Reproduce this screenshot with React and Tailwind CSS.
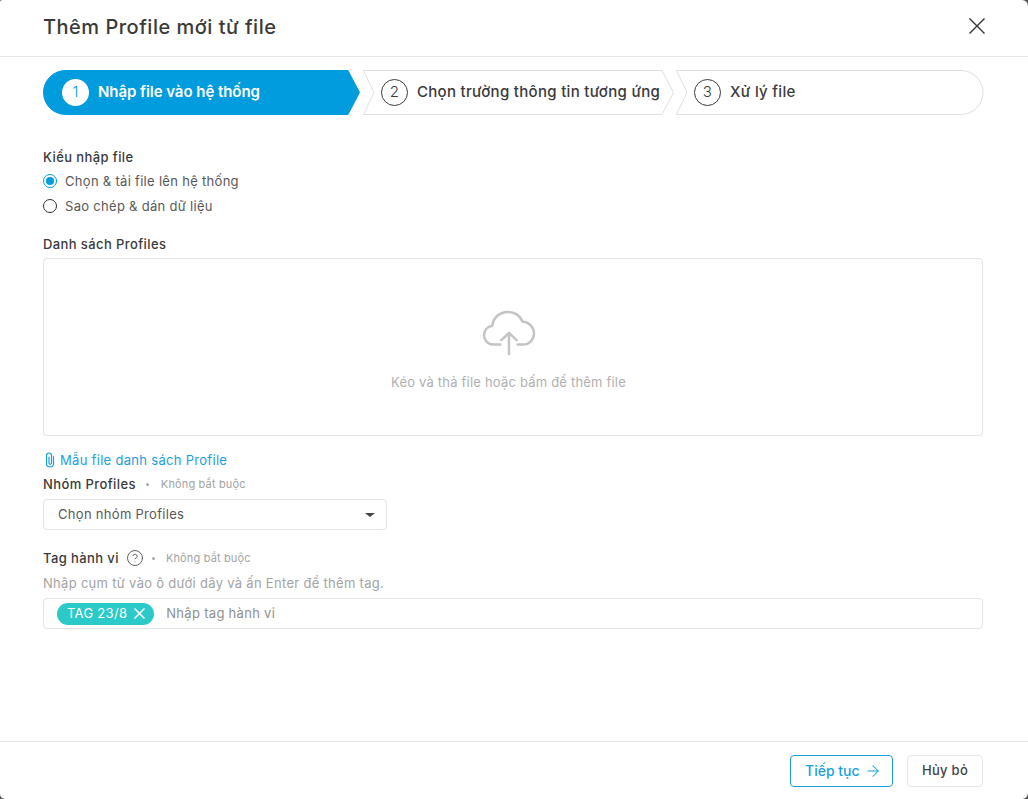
import { ArrowRight, CircleHelp } from 'lucide-react'

function StepShape({ first, last, active }) {
  const w = active ? 317 : last ? 308 : 311
  const h = 45
  let d
  if (first) d = `M22.5 0.5 H${w - 12} L${w - 0.5} 22.5 L${w - 12} 44.5 H22.5 A22 22 0 0 1 22.5 0.5 Z`
  else if (last) d = `M0.5 0.5 H${w - 23} A22 22 0 0 1 ${w - 23} 44.5 H0.5 L11 22.5 Z`
  else d = `M0.5 0.5 H${w - 12} L${w - 0.5} 22.5 L${w - 12} 44.5 H0.5 L11 22.5 Z`
  return (
    <svg className="absolute inset-0" width={w} height={h} viewBox={`0 0 ${w} ${h}`} fill="none">
      <path d={d} fill={active ? '#009cdd' : '#fff'} stroke={active ? '#009cdd' : '#dddfe3'} />
    </svg>
  )
}

function Step({ n, label, active, first, last, className }) {
  return (
    <div className={`relative h-[45px] shrink-0 ${className}`}>
      <StepShape first={first} last={last} active={active} />
      <div className={`relative flex h-full items-center gap-[9px] ${active ? 'pl-[19px]' : 'pl-[18px]'}`}>
        <span className={`flex h-[27px] w-[27px] items-center justify-center rounded-full text-[15px] font-light ${active ? 'bg-white text-[#009cdd]' : 'border border-[#3a3a3a] text-[#3a3a3a]'}`}>{n}</span>
        <span className={`-mt-px whitespace-nowrap text-[15px] ${active ? 'font-semibold tracking-[-0.05px] text-white' : 'font-medium text-[#3a3a3a]'}`}>{label}</span>
      </div>
    </div>
  )
}

function Radio({ checked, label }) {
  return (
    <label className="flex h-[25px] items-center gap-[8px] text-[13px] text-[#595959]">
      {checked ? (
        <span className="-mt-px flex h-[14px] w-[14px] items-center justify-center rounded-full border border-[#009cdd]">
          <span className="h-2 w-2 rounded-full bg-[#009cdd]" />
        </span>
      ) : (
        <span className="-mt-[2px] h-[14px] w-[14px] rounded-full border border-[#333]" />
      )}
      {label}
    </label>
  )
}

function Cross({ size, width = 1.4 }) {
  return (
    <svg width={size} height={size} viewBox={`0 0 ${size} ${size}`} fill="none" stroke="currentColor" strokeWidth={width}>
      <path d={`M0.5 0.5L${size - 0.5} ${size - 0.5}M${size - 0.5} 0.5L0.5 ${size - 0.5}`} />
    </svg>
  )
}

function Optional({ gap }) {
  return (
    <>
      <span className={`ml-[10px] h-[3px] w-[3px] rounded-full bg-[#aaa] ${gap}`} />
      <span className="text-[11px] tracking-[0.15px] text-[#a3a3a3]">Không bắt buộc</span>
    </>
  )
}

export default function App() {
  return (
    <div className="h-[799px] w-[1028px] bg-[#555]">
      <div className="flex h-full flex-col overflow-hidden rounded-tl-[2px] rounded-tr-[6px] rounded-br-[6px] rounded-bl-[5px] bg-white font-['Inter',sans-serif] tracking-[0.3px] text-[#3a3a3a]">
        <header className="flex h-[57px] shrink-0 items-center justify-between border-b border-[#e5e7eb] pl-[43px] pr-[43px]">
          <h1 className="-mt-[3px] text-[20px] font-medium tracking-[0.5px]">Thêm Profile mới từ file</h1>
          <span className="-mt-[5px] text-[#333]"><Cross size={16} /></span>
        </header>

        <main className="flex flex-1 flex-col pl-[43px] pr-[45px] pt-[13px]">
          <div className="flex">
            <Step n="1" label="Nhập file vào hệ thống" active first className="w-[317px]" />
            <Step n="2" label="Chọn trường thông tin tương ứng" className="ml-[3px] w-[311px]" />
            <Step n="3" label="Xử lý file" last className="ml-[2px] w-[307px]" />
          </div>

          <div className="mt-[33px] text-[13px] font-medium leading-[18px] tracking-[0.4px]">Kiểu nhập file</div>
          <div className="mt-[3px]">
            <Radio checked label="Chọn & tải file lên hệ thống" />
            <Radio label="Sao chép & dán dữ liệu" />
          </div>

          <div className="mt-[16px] text-[13px] font-medium leading-[18px] tracking-[0.4px]">Danh sách Profiles</div>
          <div className="mt-[5px] flex h-[178px] flex-col items-center rounded border border-[#e1e3e8] pr-[9px] pt-[50px]">
            <svg width="56" height="48" viewBox="0 0 56 50" fill="none" stroke="#c4c4c4" strokeWidth="2.6" strokeLinecap="round" strokeLinejoin="round">
              <path d="M19 37H12C6 37 2 32.5 2 27.5C2 22.5 5.5 18.5 10.5 17.5C11.5 9 18.5 3 27 3C34 3 39.5 7 42 13C49 13.5 54 19 54 25.5C54 32 49 37 43 37H37" />
              <path d="M28 47V25M20 32.5L28 25L36 32.5" />
            </svg>
            <div className="mt-[16px] text-[13px] tracking-[0.2px] text-[#b0b0b0]">Kéo và thả file hoặc bấm để thêm file</div>
          </div>

          <a className="mt-[15px] flex items-center gap-[5px] pl-[2px] text-[13px] leading-[18px] text-[#1a9fdd]">
            <svg width="10" height="16" viewBox="0 0 10 16" fill="none" stroke="currentColor" strokeWidth="1.2" strokeLinecap="round">
              <path d="M8.5 4.5V11.5A3.5 3.5 0 0 1 1.5 11.5V3.5A2.5 2.5 0 0 1 6.5 3.5V11A1.2 1.2 0 0 1 4 11V5" />
            </svg>
            Mẫu file danh sách Profile
          </a>

          <div className="mt-[6px] flex items-center leading-[18px]">
            <span className="text-[13px] font-medium tracking-[0.4px]">Nhóm Profiles</span>
            <Optional gap="mr-[12px]" />
          </div>
          <div className="mt-[6px] flex h-[31px] w-[344px] items-center justify-between rounded border border-[#e1e3e8] pl-[14px] pr-[11px] text-[13px] text-[#595959]">
            Chọn nhóm Profiles
            <span className="h-0 w-0 border-x-[5px] border-t-[4px] border-x-transparent border-t-[#444]" />
          </div>

          <div className="mt-[19px] flex items-center leading-[18px]">
            <span className="text-[13px] font-medium tracking-[0.4px]">Tag hành vi</span>
            <CircleHelp size={18} strokeWidth={1.1} className="ml-[7px] -mr-[2px] text-[#444]" />
            <Optional gap="mr-[11px]" />
          </div>
          <div className="mt-[7px] text-[13px] leading-[18px] text-[#a3a3a3]">Nhập cụm từ vào ô dưới dây và ấn Enter để thêm tag.</div>
          <div className="mt-[6px] flex h-[31px] items-center rounded border border-[#e1e3e8] pl-[13px] text-[13px]">
            <span className="flex h-[22px] items-center gap-[7px] rounded-full bg-[#2cc9c9] pl-[10px] pr-[9px] text-white">
              TAG 23/8
              <Cross size={11} width={1.5} />
            </span>
            <span className="ml-[12px] text-[#8f8f8f]">Nhập tag hành vi</span>
          </div>
        </main>

        <footer className="flex h-[58px] shrink-0 items-center justify-end gap-[14px] border-t border-[#e5e7eb] pr-[45px]">
          <button className="flex h-8 w-[103px] items-center gap-[4px] rounded border border-[#1a9fdd] pl-[14px] text-[14px] font-medium tracking-normal text-[#1a9fdd]">
            Tiếp tục
            <ArrowRight size={18} strokeWidth={1.4} />
          </button>
          <button className="flex h-8 w-[76px] items-center justify-center rounded border border-[#e5e7eb] text-[13px] font-medium text-[#444]">Hủy bỏ</button>
        </footer>
      </div>
    </div>
  )
}
